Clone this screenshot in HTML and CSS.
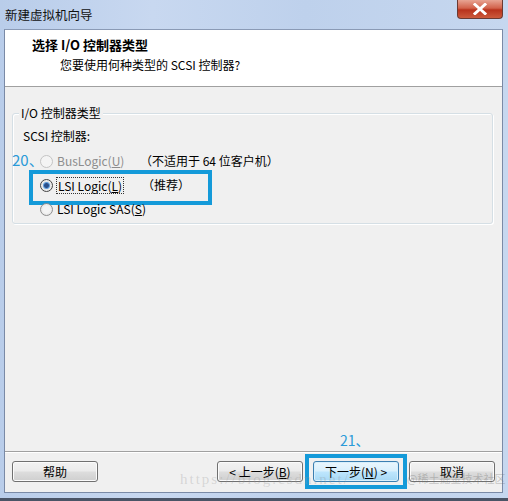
FILE: index.html
```html
<!DOCTYPE html>
<html lang="zh">
<head>
<meta charset="utf-8">
<link rel="stylesheet" href="styles.css">
</head>
<body>
<div class="window">
  <div class="titlebar">
    <span class="title">新建虚拟机向导</span>
    <div class="close"><svg width="16" height="12" viewBox="0 0 16 12"><path d="M3 1.5 L13 10.5 M13 1.5 L3 10.5" stroke="#fff" stroke-width="3" stroke-linecap="square"/></svg></div>
  </div>
  <div class="client">
    <div class="header">
      <div class="h-title">选择 I/O 控制器类型</div>
      <div class="h-sub">您要使用何种类型的 SCSI 控制器?</div>
    </div>
    <div class="body">
      <div class="group">
        <div class="legend">I/O 控制器类型</div>
        <div class="label">SCSI 控制器:</div>
        <div class="row first">
          <span class="note">20、</span>
          <span class="radio disabled"></span>
          <span class="opt disabled">BusLogic(<u>U</u>)</span>
          <span class="extra">（不适用于 64 位客户机）</span>
        </div>
        <div class="row hl">
          <span class="radio checked"></span>
          <span class="opt focus">LSI Logic(<u>L</u>)</span>
          <span class="extra">（推荐）</span>
        </div>
        <div class="row">
          <span class="radio"></span>
          <span class="opt wide">LSI Logic SAS(<u>S</u>)</span>
        </div>
      </div>
      <div class="note2">21、</div>
    </div>
    <div class="footer">
      <span class="wm">https://blog.csdn.net/</span>
      <span class="wm wm2">@稀土掘金技术社区</span>
      <button class="btn">帮助</button>
      <div class="spacer"></div>
      <button class="btn">&lt; 上一步(<u>B</u>)</button>
      <div class="hlbox"><button class="btn def">下一步(<u>N</u>) &gt;</button></div>
      <button class="btn">取消</button>
    </div>
  </div>
</div>
</body>
</html>
```

FILE: styles.css
```css
* { box-sizing: border-box; }
html, body { margin: 0; padding: 0; }
body {
  width: 508px; height: 501px; overflow: hidden;
  font-family: "Noto Sans CJK SC", "Liberation Sans", sans-serif;
  font-size: 12px; color: #000;
}
.window {
  width: 508px; height: 501px;
  display: flex; flex-direction: column;
  background: linear-gradient(90deg, #b9cdea 0%, #c8d8f0 30%, #bed1ec 60%, #c6d7ef 100%);
  border-bottom: 3px solid #4a5466;
  padding: 0 5px 5px 5px;
}
.titlebar {
  height: 29px; display: flex; align-items: flex-start;
  justify-content: space-between;
  margin: 0 -1px 0 -5px;
}
.title { padding: 6px 0 0 5px; line-height: 17px; font-size: 12.5px; color: #111; }
.close {
  width: 46px; height: 19px; margin-right: 1px;
  border: 1px solid #6b3a33; border-top: none;
  border-radius: 0 0 4px 4px;
  background: linear-gradient(#e8a493 0%, #d2624b 45%, #b8321c 55%, #cc5a3c 100%);
  display: flex; align-items: center; justify-content: center;
}
.client {
  flex: 1; display: flex; flex-direction: column;
  background: #f0f0f0;
  border: 1px solid #7a8aa6;
  border-top-color: #8a9ab5;
  margin-left: -1px;
}
.header {
  height: 57px; background: #fff;
  border-bottom: 1px solid #a0a0a0;
  padding: 6px 0 0 27px;
}
.h-title { font-weight: bold; font-size: 13px; line-height: 18px; }
.h-sub { padding-left: 28px; margin-top: 2px; line-height: 17px; }
.body { flex: 1; padding: 26px 9px 0 7px; position: relative; }
.group {
  height: 111px;
  border: 1px solid #d5dfe5; border-radius: 3px;
  box-shadow: inset 1px 1px 0 #fff, 1px 1px 0 #fff;
  position: relative; padding: 14px 0 0 9px;
}
.legend {
  position: absolute; left: 6px; top: -9px;
  background: #f0f0f0; padding: 0 2px; line-height: 16px;
}
.label { line-height: 16px; margin-left: 1px; margin-bottom: 1px; }
.row { display: flex; align-items: center; height: 24px; position: relative; padding-left: 18px; }
.row.first { margin-top: 5px; }
.note {
  position: absolute; left: -10px; top: 2px;
  color: #2a9ad8; font-size: 15px; line-height: 18px;
}
.radio {
  width: 13px; height: 13px; border-radius: 50%;
  border: 1px solid #8f8f8f;
  background: radial-gradient(circle, #f4f4f4 40%, #dcdcdc 100%);
  margin-right: 4px; flex: none;
}
.radio.disabled { border-color: #c4c4c4; background: #f4f4f4; }
.radio.checked {
  background: radial-gradient(circle, #2a4f8a 0 2px, #4b86c7 2.6px, #7fb5e8 3.4px, #e6e6e6 3.9px, #f8f8f8 100%);
  border-color: #444;
}
.opt { width: 83px; line-height: 16px; white-space: nowrap; }
.opt.wide { width: auto; }
.opt.disabled { color: #8d8d8d; }
.opt.focus { width: auto; outline: 1px dotted #333; margin-right: 19px; line-height: 15px; padding: 0 1px; }
.extra { line-height: 16px; white-space: nowrap; }
.row.hl::before {
  content: ""; position: absolute;
  left: 7px; top: -3px; width: 175px; height: 27px;
  border: 4px solid #149ad9;
}
.note2 {
  position: absolute; left: 335px; bottom: 2px;
  color: #2a9ad8; font-size: 14px; line-height: 18px;
}
.footer {
  height: 41px; border-top: 1px solid #a0a0a0;
  box-shadow: inset 0 1px 0 #fff;
  display: flex; align-items: center;
  padding: 0 7px 2px 7px; position: relative;
}
.spacer { flex: 1; }
.btn {
  width: 86px; height: 21px; position: relative;
  font: inherit; font-size: 12px; color: #000;
  border: 1px solid #707070; border-radius: 3px;
  background: linear-gradient(#f2f2f2 0%, #ebebeb 48%, #dddddd 52%, #cfcfcf 100%);
  box-shadow: inset 0 0 0 1px #fbfbfb;
  padding: 0; line-height: 17px; white-space: nowrap;
}
.hlbox {
  border: 4px solid #149ad9; padding: 3px 4px;
  margin: 0 2px 0 2px;
}
.btn.def {
  border-color: #3c7fb1;
  background: linear-gradient(#eaf6fd 0%, #d9f0fc 48%, #bee6fd 52%, #a7d9f5 100%);
  box-shadow: inset 0 0 0 1px #d8f0fc;
}
.wm {
  position: absolute; left: 175px; bottom: 4px;
  color: rgba(150,150,150,0.3); font-size: 15px;
  font-family: "Liberation Serif", serif; letter-spacing: 2px;
  pointer-events: none; white-space: nowrap; z-index: 2;
}
.wm2 { left: 402px; font-size: 11px; letter-spacing: 0; bottom: 6px; font-family: "Noto Sans CJK SC", sans-serif; color: rgba(110,110,110,0.35); }
```
